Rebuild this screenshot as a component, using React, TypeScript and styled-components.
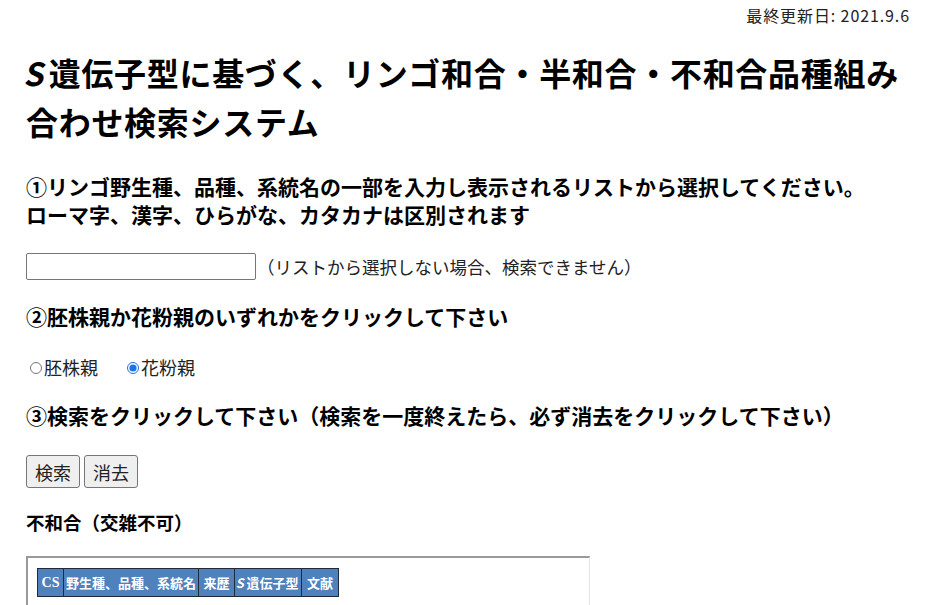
import React from "react";
import styled, { createGlobalStyle } from "styled-components";

const GlobalStyle = createGlobalStyle`
  body {
    margin: 0;
    background: #fff;
    color: #000;
    font-family: "Noto Sans CJK JP", "Noto Sans", sans-serif;
  }
`;

const Page = styled.div`
  padding: 0 25px 0 26px;
  height: 605px;
  overflow: hidden;
  box-sizing: border-box;
`;

const Updated = styled.div`
  padding-top: 4px;
  text-align: right;
  font-size: 16px;
  line-height: 22px;
  letter-spacing: 0.9px;
  color: #222;
`;

// slanted gene symbol "S"
const Gene = styled.span<{ $gap: number }>`
  display: inline-block;
  font-style: normal;
  transform: skewX(-12deg);
  padding-right: ${(p) => p.$gap}px;
`;

const Title = styled.h1`
  margin: 22px 0 0;
  font-size: 32px;
  line-height: 49px;
  font-weight: 700;
  letter-spacing: 0.7px;
`;

const Step = styled.h2<{ $gap: number }>`
  margin: ${(p) => p.$gap}px 0 0;
  font-size: 21px;
  line-height: 28px;
  font-weight: 700;
`;

const Row = styled.div<{ $gap: number }>`
  display: flex;
  align-items: center;
  margin-top: ${(p) => p.$gap}px;
`;

const TextInput = styled.input`
  width: 230px;
  height: 27px;
  box-sizing: border-box;
  border: 1px solid #767676;
  border-radius: 2px;
  margin: 0;
`;

const Note = styled.span`
  margin-left: 1px;
  font-size: 17.5px;
  line-height: 24px;
  color: #222;
`;

const RadioLabel = styled.label`
  display: flex;
  align-items: center;
  font-size: 18px;
  line-height: 24px;
  color: #222;
  margin-right: 25px;
`;

const Radio = styled.input`
  width: 12px;
  height: 12px;
  margin: 1px 2px 0 4px;
  accent-color: #1a73e8;
`;

const Button = styled.button`
  height: 33px;
  padding: 0 8px;
  margin-right: 4px;
  font-family: inherit;
  font-size: 18px;
  color: #222;
  background: #efefef;
  border: 1px solid #767676;
  border-radius: 3px;
`;

const SubHead = styled.h3`
  margin: 22px 0 0;
  font-size: 18.5px;
  line-height: 24px;
  font-weight: 700;
`;

const Frame = styled.div`
  margin-top: 22px;
  width: 564px;
  height: 60px;
  box-sizing: border-box;
  border-top: 2px solid #9a9a9a;
  border-left: 2px solid #9a9a9a;
  border-right: 1px solid #e6e6e6;
  padding: 10px 0 0 9px;
`;

const Table = styled.table`
  border-collapse: collapse;
`;

const Th = styled.th<{ $w: number; $serif?: boolean }>`
  width: ${(p) => p.$w}px;
  height: 28px;
  box-sizing: border-box;
  padding: 0 2px;
  background: #4f81bd;
  color: #fff;
  border: 1px solid #1f2a3a;
  font-size: ${(p) => (p.$serif ? 14 : 13)}px;
  font-weight: 700;
  white-space: nowrap;
  font-family: ${(p) =>
    p.$serif ? '"Liberation Serif", serif' : '"Noto Sans CJK JP", sans-serif'};
`;

export default function App() {
  return (
    <>
      <GlobalStyle />
      <Page>
        <Updated>最終更新日: 2021.9.6</Updated>
        <Title>
          <Gene $gap={2}>S</Gene>遺伝子型に基づく、リンゴ和合・半和合・不和合品種組み合わせ検索システム
        </Title>
        <Step $gap={26}>
          ①リンゴ野生種、品種、系統名の一部を入力し表示されるリストから選択してください。
          <br />
          ローマ字、漢字、ひらがな、カタカナは区別されます
        </Step>
        <Row $gap={25}>
          <TextInput type="text" />
          <Note>（リストから選択しない場合、検索できません）</Note>
        </Row>
        <Step $gap={22}>②胚株親か花粉親のいずれかをクリックして下さい</Step>
        <Row $gap={25}>
          <RadioLabel>
            <Radio type="radio" name="parent" />
            胚株親
          </RadioLabel>
          <RadioLabel>
            <Radio type="radio" name="parent" defaultChecked />
            花粉親
          </RadioLabel>
        </Row>
        <Step $gap={22}>
          ③検索をクリックして下さい（検索を一度終えたら、必ず消去をクリックして下さい）
        </Step>
        <Row $gap={26}>
          <Button>検索</Button>
          <Button>消去</Button>
        </Row>
        <SubHead>不和合（交雑不可）</SubHead>
        <Frame>
          <Table>
            <thead>
              <tr>
                <Th $w={26} $serif>
                  CS
                </Th>
                <Th $w={134}>野生種、品種、系統名</Th>
                <Th $w={36}>来歴</Th>
                <Th $w={67}>
                  <Gene $gap={1}>S</Gene>遺伝子型
                </Th>
                <Th $w={37}>文献</Th>
              </tr>
            </thead>
          </Table>
        </Frame>
      </Page>
    </>
  );
}
